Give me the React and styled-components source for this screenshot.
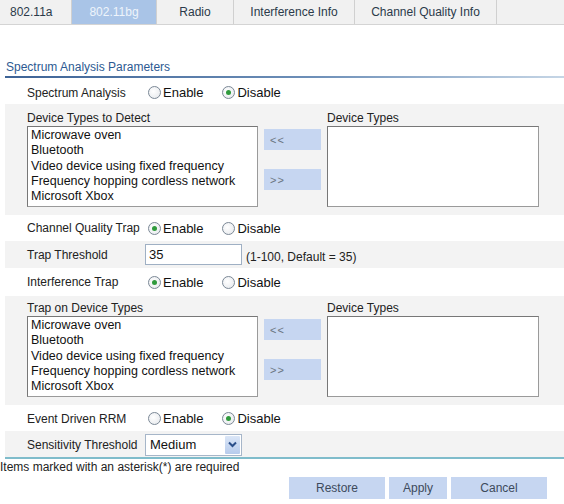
import React from "react"
import styled, { createGlobalStyle } from "styled-components"

const Global = createGlobalStyle`
  html, body { margin: 0; padding: 0; background: #fff; }
  body { font-family: "Liberation Sans", Arial, sans-serif; font-size: 12px; color: #111; }
`

const Page = styled.div`
  width: 564px;
  height: 504px;
  overflow: hidden;
`

const TabBar = styled.div`
  display: flex;
  height: 24px;
  background: #f1f1f1;
  border-bottom: 1px solid #d4d4d4;
`

const Tab = styled.div`
  width: ${p => p.w}px;
  display: flex;
  align-items: center;
  justify-content: ${p => (p.first ? "flex-start" : "center")};
  padding-left: ${p => (p.first ? "10px" : "0")};
  border-right: 1px solid #d0d0d0;
  box-sizing: border-box;
  color: ${p => (p.active ? "#eef4fb" : "#2b3a4a")};
  background: ${p => (p.active ? "#a9c4e7" : "transparent")};
`

const Section = styled.div`
  margin-top: 35px;
  padding-left: 6px;
  color: #2d5a92;
  height: 16px;
  line-height: 14px;
`

const Rule = styled.div`
  height: 2px;
  margin-left: 5px;
  background: linear-gradient(to right, #3d6396, #6d8fb8 55%, #c6d6e6);
`

const Form = styled.div`
  margin-left: 5px;
`

const Row = styled.div`
  display: flex;
  align-items: center;
  height: ${p => p.h || 26}px;
  box-sizing: border-box;
  padding-left: 22px;
  padding-top: ${p => p.pt || 0}px;
  background: ${p => (p.shade ? "#f3f3f3" : "#fff")};
`

const Label = styled.div`
  width: 118px;
  color: #222;
`

const Radios = styled.div`
  display: flex;
  gap: 19px;
  margin-left: 3px;
`

const RadioItem = styled.label`
  display: flex;
  align-items: center;
  gap: 2px;
  color: #111;
  font-size: 13px;
`

const Dot = styled.span`
  width: 11px;
  height: 11px;
  border-radius: 50%;
  border: 1px solid #7b8896;
  background: radial-gradient(circle at 40% 40%, #fff, #e3e6ea);
  display: inline-flex;
  align-items: center;
  justify-content: center;
  &::after {
    content: "";
    width: 5px;
    height: 5px;
    border-radius: 50%;
    background: ${p => (p.on ? "#2f9a3c" : "transparent")};
  }
`

const Radio = ({ label, on }) => (
  <RadioItem>
    <Dot on={on} />
    {label}
  </RadioItem>
)

const TransferWrap = styled.div`
  display: flex;
  padding-left: 22px;
  padding-top: ${p => p.top}px;
  height: ${p => p.h}px;
  box-sizing: border-box;
  background: #f3f3f3;
`

const Col = styled.div`
  display: flex;
  flex-direction: column;
`

const ColTitle = styled.div`
  color: #222;
  height: 13px;
  line-height: 13px;
  margin-bottom: 1px;
`

const ListBox = styled.div`
  width: ${p => p.w}px;
  height: 81px;
  box-sizing: border-box;
  border: 1px solid #9a9a9a;
  border-top-color: #777;
  border-left-color: #777;
  background: #fff;
  padding: 1px 3px;
  font-size: 12.5px;
  line-height: 15.3px;
  overflow: hidden;
`

const MoveCol = styled.div`
  display: flex;
  flex-direction: column;
  gap: 19px;
  margin: 0 6px;
  padding-top: 17px;
`

const MoveBtn = styled.div`
  width: 57px;
  height: 21px;
  background: #c6d6f1;
  color: #6a7480;
  display: flex;
  align-items: center;
  padding-left: 6px;
  box-sizing: border-box;
  font-size: 11px;
  letter-spacing: 1px;
`

const TextInput = styled.div`
  width: 97px;
  height: 21px;
  box-sizing: border-box;
  border: 1px solid #9fb0c4;
  background: #fff;
  padding-left: 3px;
  display: flex;
  align-items: center;
  font-size: 13px;
`

const Hint = styled.span`
  margin-left: 4px;
  margin-top: 4px;
  color: #222;
`

const Select = styled.div`
  width: 97px;
  height: 22px;
  box-sizing: border-box;
  border: 1px solid #a6b6c9;
  background: #fff;
  display: flex;
  align-items: center;
  justify-content: space-between;
  padding-left: 4px;
  font-size: 13px;
`

const Arrow = styled.div`
  width: 15px;
  height: 18px;
  margin-right: 1px;
  background: linear-gradient(#dbe6f7, #b7cbec);
  border-radius: 1px;
  display: flex;
  align-items: center;
  justify-content: center;
`

const Footer = styled.div`
  border-top: 2px solid #7fbccb;
  margin-left: 5px;
`

const Note = styled.div`
  margin-left: -5px;
  padding-top: 1px;
  height: 14px;
  color: #222;
`

const Actions = styled.div`
  display: flex;
  gap: 4px;
  justify-content: flex-end;
  padding: 3px 17px 0 0;
`

const Button = styled.div`
  width: ${p => p.w}px;
  height: 22px;
  background: #c6d6f1;
  color: #3d4a5c;
  display: flex;
  align-items: center;
  justify-content: center;
`

const devices = [
  "Microwave oven",
  "Bluetooth",
  "Video device using fixed frequency",
  "Frequency hopping cordless network",
  "Microsoft Xbox",
]

const tabs = [
  ["802.11a", 72],
  ["802.11bg", 85],
  ["Radio", 77],
  ["Interference Info", 121],
  ["Channel Quality Info", 142],
]

const Transfer = ({ title, top, h }) => (
  <TransferWrap top={top} h={h}>
    <Col>
      <ColTitle>{title}</ColTitle>
      <ListBox w={231}>
        {devices.map(d => (
          <div key={d}>{d}</div>
        ))}
      </ListBox>
    </Col>
    <MoveCol>
      <MoveBtn>{"<<"}</MoveBtn>
      <MoveBtn>{">>"}</MoveBtn>
    </MoveCol>
    <Col>
      <ColTitle>Device Types</ColTitle>
      <ListBox w={212} />
    </Col>
  </TransferWrap>
)

export default function App() {
  return (
    <Page>
      <Global />
      <TabBar>
        {tabs.map(([t, w], i) => (
          <Tab key={t} w={w} first={i === 0} active={t === "802.11bg"}>
            {t}
          </Tab>
        ))}
      </TabBar>
      <Section>Spectrum Analysis Parameters</Section>
      <Rule />
      <Form>
        <Row h={26} pt={3}>
          <Label>Spectrum Analysis</Label>
          <Radios>
            <Radio label="Enable" />
            <Radio label="Disable" on />
          </Radios>
        </Row>
        <Transfer title="Device Types to Detect" top={8} h={111} />
        <Row h={26}>
          <Label>Channel Quality Trap</Label>
          <Radios>
            <Radio label="Enable" on />
            <Radio label="Disable" />
          </Radios>
        </Row>
        <Row shade h={27}>
          <Label>Trap Threshold</Label>
          <TextInput>35</TextInput>
          <Hint>(1-100, Default = 35)</Hint>
        </Row>
        <Row h={28}>
          <Label>Interference Trap</Label>
          <Radios>
            <Radio label="Enable" on />
            <Radio label="Disable" />
          </Radios>
        </Row>
        <Transfer title="Trap on Device Types" top={6} h={109} />
        <Row h={26} pt={1}>
          <Label>Event Driven RRM</Label>
          <Radios>
            <Radio label="Enable" />
            <Radio label="Disable" on />
          </Radios>
        </Row>
        <Row shade h={26} pt={1}>
          <Label>Sensitivity Threshold</Label>
          <Select>
            Medium
            <Arrow>
              <svg width="9" height="7" viewBox="0 0 9 7">
                <path d="M1 1.5 L4.5 5 L8 1.5" fill="none" stroke="#2b4f8a" strokeWidth="2" />
              </svg>
            </Arrow>
          </Select>
        </Row>
      </Form>
      <Footer>
        <Note>Items marked with an asterisk(*) are required</Note>
        <Actions>
          <Button w={96}>Restore</Button>
          <Button w={58}>Apply</Button>
          <Button w={96}>Cancel</Button>
        </Actions>
      </Footer>
    </Page>
  )
}
